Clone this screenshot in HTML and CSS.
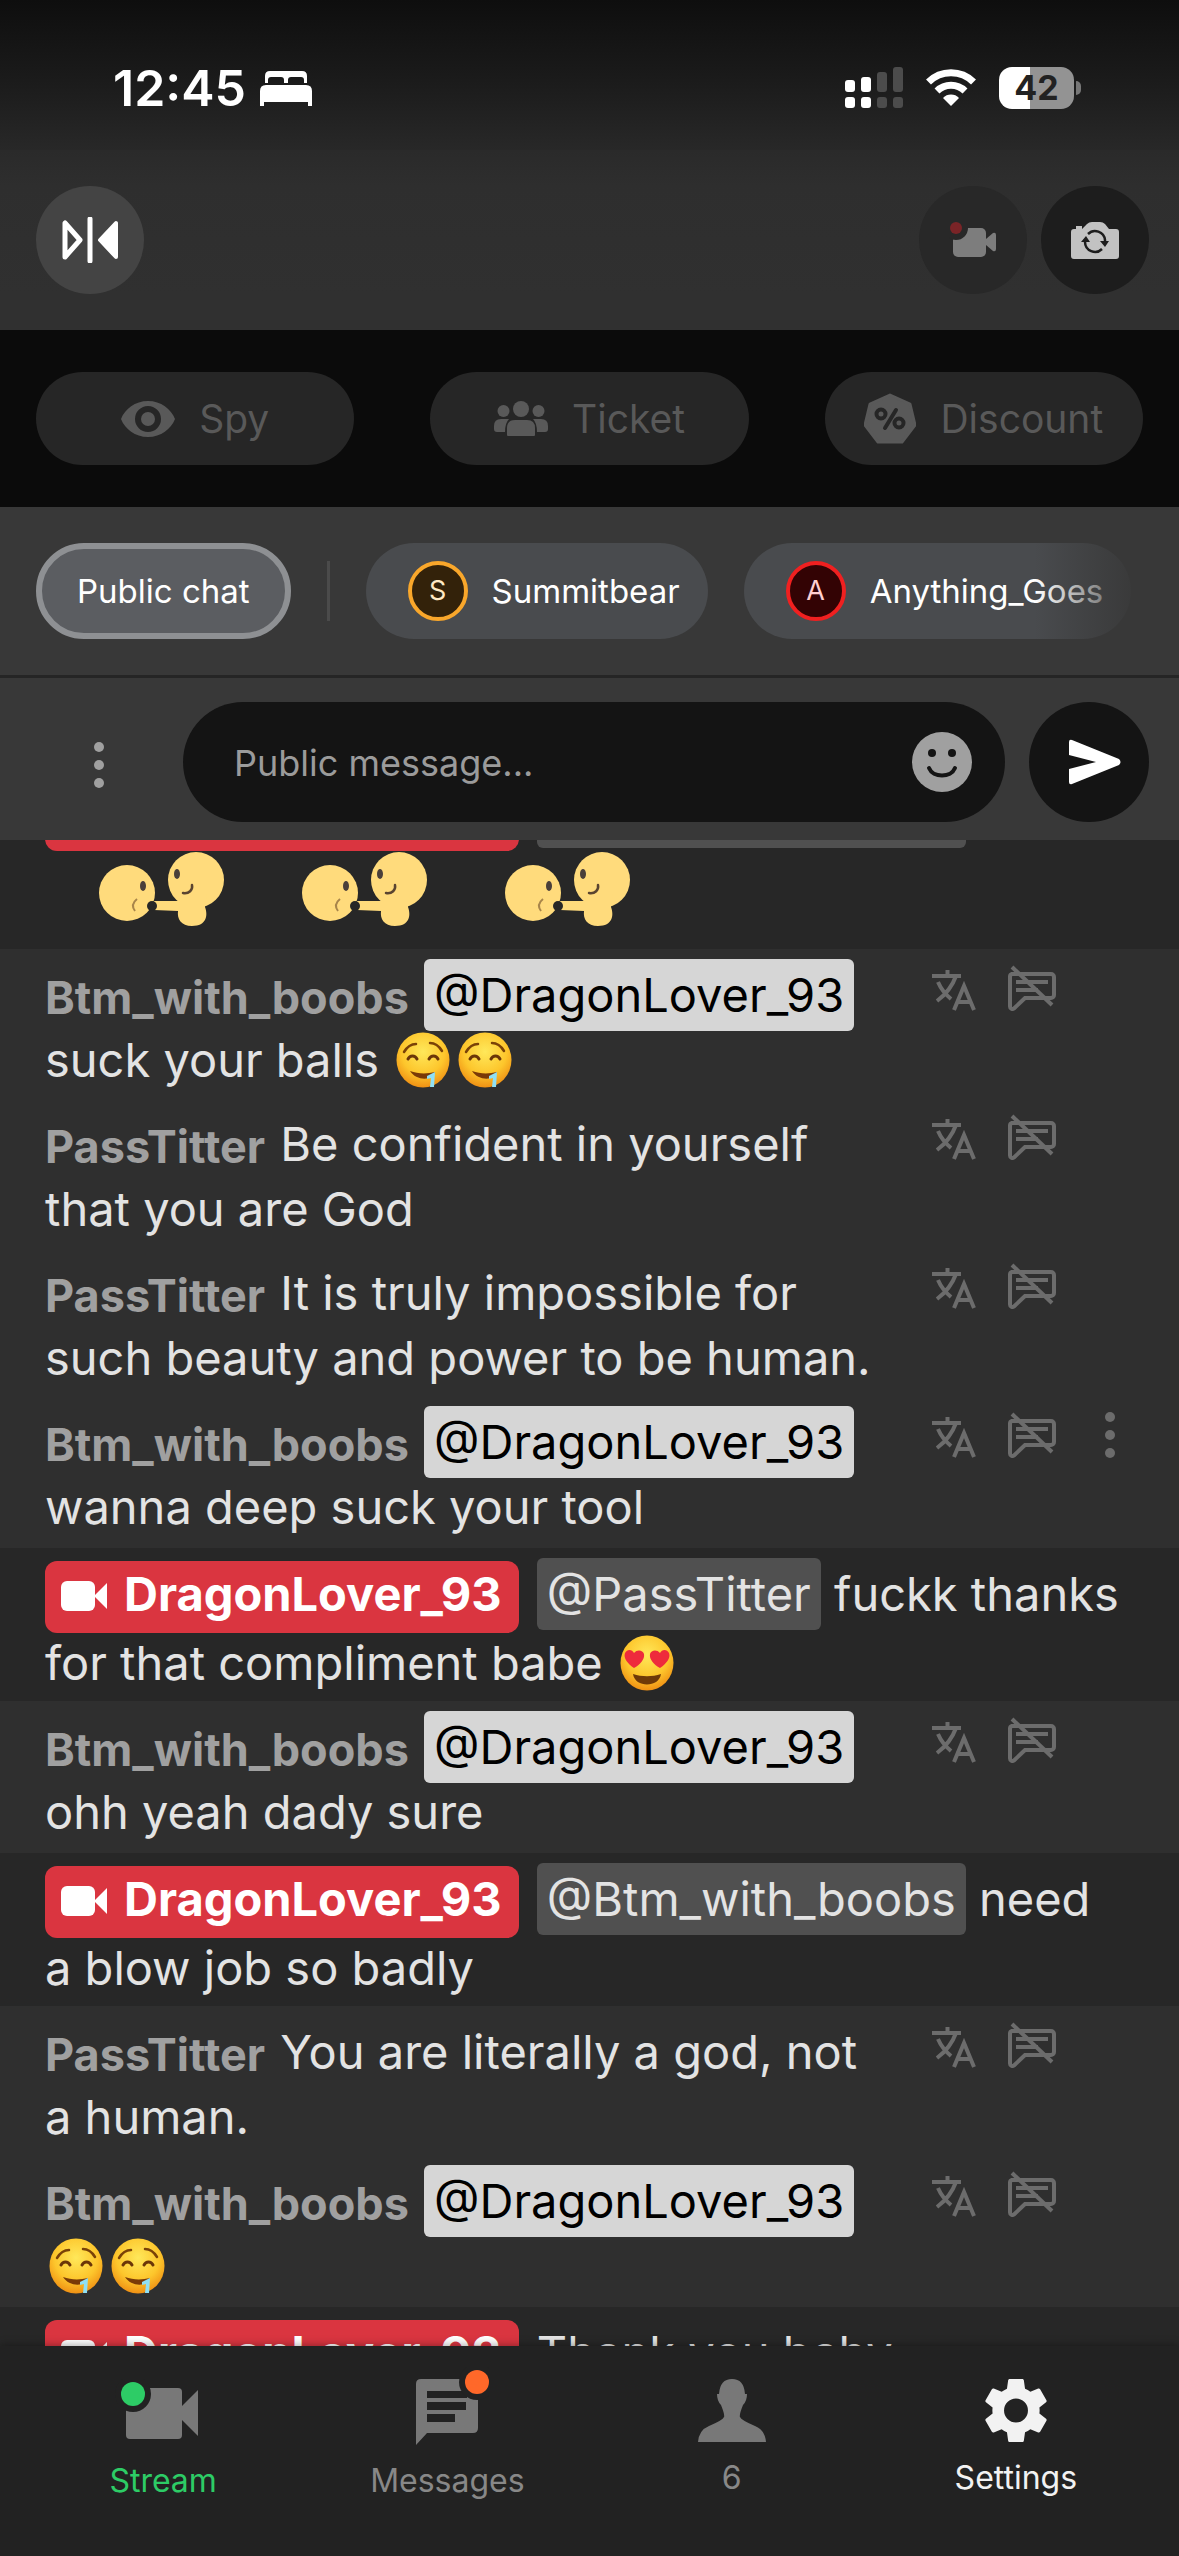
FILE: index.html
```html
<!DOCTYPE html>
<html lang="en">
<head>
<meta charset="utf-8">
<meta name="viewport" content="width=device-width, initial-scale=1">
<title>Live stream chat</title>
<link rel="stylesheet" href="styles.css">
</head>
<body>
<svg class="sprite" width="0" height="0" aria-hidden="true">
  <defs>
    <radialGradient id="face" cx="50%" cy="35%" r="68%">
      <stop offset="0" stop-color="#ffe85a"/><stop offset=".6" stop-color="#fdc62c"/><stop offset="1" stop-color="#ee8a11"/>
    </radialGradient>
  </defs>
  <symbol id="i-translate" viewBox="0 0 48 48">
    <path d="M2 11h29M17.500 5v6M26 11C22 22 15 30 7 36M8 17c3 7 7 12 13 17" fill="none" stroke="currentColor" stroke-width="4"/>
    <path d="M24 45l10-24 10 24M27 37h14" fill="none" stroke="currentColor" stroke-width="4"/>
  </symbol>
  <symbol id="i-mute" viewBox="0 0 48 48">
    <path d="M4 9h39a3 3 0 0 1 3 3v18a3 3 0 0 1-3 3H17L6 43.500a2.500 2.500 0 0 1-4-2V12a3 3 0 0 1 2-3z" fill="none" stroke="currentColor" stroke-width="4"/>
    <path d="M8 17h32M8 25h22" stroke="currentColor" stroke-width="4"/>
    <path d="M4 2l40 38" stroke="currentColor" stroke-width="4"/>
  </symbol>
  <symbol id="i-dots" viewBox="0 0 48 48">
    <circle cx="24" cy="5" r="5" fill="currentColor"/><circle cx="24" cy="23" r="5" fill="currentColor"/><circle cx="24" cy="41" r="5" fill="currentColor"/>
  </symbol>
  <symbol id="i-cam" viewBox="0 0 46 30">
    <rect width="34" height="30" rx="6" fill="currentColor"/><path d="M33 15L46 2v26z" fill="currentColor"/>
  </symbol>
  <symbol id="e-drool" viewBox="0 0 54 56">
    <ellipse cx="27" cy="28" rx="26.500" ry="27.500" fill="url(#face)"/>
    <path d="M8 20c3-5 7-8 12-8M34 11c5 0 9 3 12 8" fill="none" stroke="#7a4207" stroke-width="2.500" stroke-linecap="round"/>
    <path d="M12 27c2-4 7-4 9 0M33 27c2-4 7-4 9 0" fill="none" stroke="#6b3608" stroke-width="3" stroke-linecap="round"/>
    <path d="M14 39c8 3 17 3 25 1-2 9-19 9-25-1z" fill="#7a3a08"/>
    <path d="M31 44l8-4-1 15h-4l1-9-4 1z" fill="#8fe0f5"/>
  </symbol>
  <symbol id="e-love" viewBox="0 0 54 56">
    <ellipse cx="27" cy="28" rx="26.500" ry="27.500" fill="url(#face)"/>
    <path d="M14 33C8 29 3 23 5 18c2-4 7-4 9 0 3-4 9-3 10 1 1 5-4 11-10 14z" fill="#ee2b3c"/>
    <path d="M40 33c6-4 11-10 9-15-2-4-7-4-9 0-3-4-9-3-10 1-1 5 4 11 10 14z" fill="#ee2b3c"/>
    <path d="M13 39c9 3 19 3 28 0-2 14-26 14-28 0z" fill="#6f3a08"/>
  </symbol>
  <symbol id="e-pair" viewBox="0 0 190 99">
    <g fill="#ffdb7c">
      <circle cx="82" cy="47" r="28"/><circle cx="151" cy="34" r="28"/>
      <path d="M109 55h25l2-8h26l-2 14c3 8 2 19-13 19-11 0-15-7-14-15l-24-1z"/>
    </g>
    <circle cx="107" cy="60" r="5" fill="#272727"/>
    <ellipse cx="98" cy="40" rx="3" ry="5" fill="#4a3f3a"/><ellipse cx="132" cy="28" rx="3" ry="5" fill="#4a3f3a"/>
    <path d="M138 47c6 1 10-3 9-8" fill="none" stroke="#5a4430" stroke-width="2.500" stroke-linecap="round"/>
    <path d="M92 53c-5 4-5 8-2 12" fill="none" stroke="#a8854a" stroke-width="2"/>
  </symbol>
</svg>

<header class="top">
  <div class="status">
    <div class="status-left">
      <span class="clock">12:45</span>
      <svg width="52" height="37" viewBox="0 0 52 37" fill="#fff"><path d="M5 13V6q0-5 5-5h32q5 0 5 5v7h-3V10q0-3-3-3H31q-3 0-3 3v3h-4V10q0-3-3-3H11q-3 0-3 3v3zM0 36V21q0-6 6-6h40q6 0 6 6v15h-4v-4H4v4z"/></svg>
    </div>
    <div class="status-right">
      <svg width="58" height="42" viewBox="0 0 58 42"><g fill="#fff"><rect y="13" width="10" height="12" rx="3"/><rect x="16" y="10" width="10" height="15" rx="3"/><rect y="30" width="10" height="11" rx="3"/><rect x="16" y="30" width="10" height="11" rx="3"/></g><g fill="#4c4c4c"><rect x="32" y="5" width="10" height="20" rx="3"/><rect x="48" width="10" height="25" rx="3"/><rect x="32" y="30" width="10" height="11" rx="3"/><rect x="48" y="30" width="10" height="11" rx="3"/></g></svg>
      <svg width="52" height="38" viewBox="0 0 52 38" fill="none" stroke="#fff" stroke-width="7"><path d="M3.500 13a32 32 0 0 1 45 0M12 22a20 20 0 0 1 28 0"/><path d="M26 37l-8-8a11 11 0 0 1 16 0z" fill="#fff" stroke="none"/></svg>
      <div class="battery"><span>42</span></div>
    </div>
  </div>
  <div class="tools">
    <button class="round flip" aria-label="Mirror"><svg width="56" height="46" viewBox="0 0 56 46"><path d="M3 6v34l15-17z" fill="none" stroke="#fff" stroke-width="5" stroke-linejoin="round"/><path d="M28 2v42" stroke="#fff" stroke-width="5" stroke-linecap="round"/><path d="M54 6v34L38 23z" fill="#fff" stroke="#fff" stroke-width="4" stroke-linejoin="round"/></svg></button>
    <div class="tools-right">
      <button class="round rec" aria-label="Record"><svg width="48" height="36" viewBox="0 0 48 36"><rect x="4" y="6" width="33" height="29" rx="5" fill="#7d7d7d"/><path d="M37 17l7-6q3-1 3 2v14q0 3-3 2l-7-6z" fill="#7d7d7d"/><circle cx="7" cy="6" r="12" fill="#282828"/><circle cx="7" cy="6" r="6" fill="#7a2427"/></svg></button>
      <button class="round swap" aria-label="Switch camera"><svg width="48" height="37" viewBox="0 0 48 37"><path d="M0 10q0-3 3-3h2V4h6v3l5-5q2-2 5-2h8q3 0 5 2l4 5h7q3 0 3 3v24q0 3-3 3H3q-3 0-3-3z" fill="#c2c2c2"/><path d="M17 12a10 10 0 0 1 17 6v3M31 27a10 10 0 0 1-17-7v-3" fill="none" stroke="#1d1d1d" stroke-width="2.500"/><path d="M10 20l5-6 4 6zM29 19h9l-4 6z" fill="#1d1d1d"/></svg></button>
    </div>
  </div>
</header>

<nav class="modes" aria-label="Show modes">
  <button class="mode"><svg width="54" height="36" viewBox="0 0 54 36"><path d="M27 0C14 0 4 8 0 18c4 10 14 18 27 18s23-8 27-18C50 8 40 0 27 0zm0 31a13 13 0 1 1 0-26 13 13 0 0 1 0 26z" fill="currentColor"/><circle cx="27" cy="18" r="7" fill="currentColor"/></svg>Spy</button>
  <button class="mode"><svg width="54" height="36" viewBox="0 0 54 36" fill="currentColor"><circle cx="27" cy="8" r="8"/><circle cx="9.500" cy="10" r="6"/><circle cx="44.500" cy="10" r="6"/><path d="M13 34V27q0-8 8-8h12q8 0 8 8v7q0 1-1 1H14q-1 0-1-1zM0 28v-3q0-7 7-7h8q-4 4-4 13H3q-3 0-3-3zM54 28v-3q0-7-7-7h-8q4 4 4 13h8q3 0 3-3z"/></svg>Ticket</button>
  <button class="mode"><svg width="52" height="52" viewBox="0 0 52 52"><path d="M26 2l20 9 5 21-13 17H14L1 32 6 11z" fill="currentColor" stroke="currentColor" stroke-width="3" stroke-linejoin="round"/><g fill="none" stroke="#262626" stroke-width="4" stroke-linecap="round"><circle cx="17" cy="21" r="4.500"/><circle cx="35" cy="30" r="4.500"/><path d="M32 17L21 35"/></g></svg>Discount</button>
</nav>

<div class="tabs">
  <button class="tab active">Public chat</button>
  <span class="divider"></span>
  <button class="tab"><span class="avatar gold">S</span>Summitbear</button>
  <button class="tab"><span class="avatar red">A</span>Anything_Goes</button>
</div>

<form class="composer">
  <button type="button" class="more" aria-label="More options"><svg width="48" height="48"><use href="#i-dots"/></svg></button>
  <div class="field">
    <input type="text" placeholder="Public message..." aria-label="Public message">
    <button type="button" class="smile" aria-label="Emoji"><svg width="60" height="60" viewBox="0 0 60 60"><circle cx="30" cy="30" r="30" fill="#a0a0a0"/><circle cx="20" cy="21" r="4" fill="#141414"/><circle cx="40" cy="21" r="4" fill="#141414"/><path d="M17 36c4 10 22 10 26 0" fill="none" stroke="#141414" stroke-width="4" stroke-linecap="round"/></svg></button>
  </div>
  <button type="button" class="send" aria-label="Send"><svg width="52" height="46" viewBox="0 0 52 46"><path d="M0 3Q0 0 3 1l47 19q3 3 0 6L3 45q-3 1-3-2V30l27-7L0 16z" fill="#fff"/></svg></button>
</form>

<main class="chat">
  <div class="log">
    <div class="msg host">
      <p><b class="badge"><svg class="cam" width="46" height="30"><use href="#i-cam"/></svg>DragonLover_93</b> <span class="tag">@Btm_with_boobs</span><br><svg class="pair" width="190" height="99"><use href="#e-pair"/></svg> <svg class="pair" width="190" height="99"><use href="#e-pair"/></svg> <svg class="pair" width="190" height="99"><use href="#e-pair"/></svg></p>
    </div>
    <div class="msg">
      <p><b class="name">Btm_with_boobs</b> <span class="tag me">@DragonLover_93</span> suck your balls <svg class="emoji" role="img" aria-label="🤤"><use href="#e-drool"/></svg><svg class="emoji" role="img" aria-label="🤤"><use href="#e-drool"/></svg></p>
      <div class="actions"><button aria-label="Translate"><svg><use href="#i-translate"/></svg></button><button aria-label="Mute"><svg><use href="#i-mute"/></svg></button></div>
    </div>
    <div class="msg">
      <p><b class="name">PassTitter</b> Be confident in yourself that you are God</p>
      <div class="actions"><button aria-label="Translate"><svg><use href="#i-translate"/></svg></button><button aria-label="Mute"><svg><use href="#i-mute"/></svg></button></div>
    </div>
    <div class="msg">
      <p><b class="name">PassTitter</b> It is truly impossible for such beauty and power to be human.</p>
      <div class="actions"><button aria-label="Translate"><svg><use href="#i-translate"/></svg></button><button aria-label="Mute"><svg><use href="#i-mute"/></svg></button></div>
    </div>
    <div class="msg last">
      <p><b class="name">Btm_with_boobs</b> <span class="tag me">@DragonLover_93</span> wanna deep suck your tool</p>
      <div class="actions"><button aria-label="Translate"><svg><use href="#i-translate"/></svg></button><button aria-label="Mute"><svg><use href="#i-mute"/></svg></button><button aria-label="More"><svg><use href="#i-dots"/></svg></button></div>
    </div>
    <div class="msg host">
      <p><b class="badge"><svg class="cam" width="46" height="30"><use href="#i-cam"/></svg>DragonLover_93</b> <span class="tag">@PassTitter</span> fuckk thanks for that compliment babe <svg class="emoji" role="img" aria-label="😍"><use href="#e-love"/></svg></p>
    </div>
    <div class="msg last">
      <p><b class="name">Btm_with_boobs</b> <span class="tag me">@DragonLover_93</span> ohh yeah dady sure</p>
      <div class="actions"><button aria-label="Translate"><svg><use href="#i-translate"/></svg></button><button aria-label="Mute"><svg><use href="#i-mute"/></svg></button></div>
    </div>
    <div class="msg host">
      <p><b class="badge"><svg class="cam" width="46" height="30"><use href="#i-cam"/></svg>DragonLover_93</b> <span class="tag">@Btm_with_boobs</span> need a&nbsp;blow job so badly</p>
    </div>
    <div class="msg">
      <p><b class="name">PassTitter</b> You are literally a god, not a&nbsp;human.</p>
      <div class="actions"><button aria-label="Translate"><svg><use href="#i-translate"/></svg></button><button aria-label="Mute"><svg><use href="#i-mute"/></svg></button></div>
    </div>
    <div class="msg last">
      <p><b class="name">Btm_with_boobs</b> <span class="tag me">@DragonLover_93</span> <svg class="emoji" role="img" aria-label="🤤"><use href="#e-drool"/></svg><svg class="emoji" role="img" aria-label="🤤"><use href="#e-drool"/></svg></p>
      <div class="actions"><button aria-label="Translate"><svg><use href="#i-translate"/></svg></button><button aria-label="Mute"><svg><use href="#i-mute"/></svg></button></div>
    </div>
    <div class="msg host">
      <p><b class="badge"><svg class="cam" width="46" height="30"><use href="#i-cam"/></svg>DragonLover_93</b> Thank you baby</p>
    </div>
  </div>
</main>

<nav class="bottom" aria-label="Main">
  <a href="#" class="item stream"><svg width="96" height="66" viewBox="0 0 96 66"><rect x="11" y="9" width="56" height="51" rx="4" fill="#787878"/><path d="M67 27l16-16v46L67 41z" fill="#787878"/><circle cx="18" cy="15" r="18" fill="#222"/><circle cx="18" cy="15" r="12" fill="#2dcc66"/></svg>Stream</a>
  <a href="#" class="item"><svg width="84" height="78" viewBox="0 0 84 78"><path d="M11 17q0-5 5-5h52q5 0 5 5v44q0 5-5 5H22L11 78z" fill="#787878"/><path d="M22 24h40v7H22zM22 35h39v8H22zM22 47h28v8H22z" fill="#222"/><circle cx="72" cy="15" r="18" fill="#222"/><circle cx="72" cy="15" r="12" fill="#ff6829"/></svg>Messages</a>
  <a href="#" class="item plain"><svg width="68" height="63" viewBox="0 0 68 63"><path d="M0 63q1-12 11-16 14-6 15-9 1-2-3-12-4-4-4-11h2Q22 0 34 0t13 15h2q0 7-4 11-4 10-3 12 1 3 15 9 10 4 11 16z" fill="#787878"/></svg>6</a>
  <a href="#" class="item plain current"><svg width="64" height="63" viewBox="2.270 2 19.460 20"><path fill="#f2f2f2" d="M19.430 12.980c.04-.32.07-.64.07-.98s-.03-.66-.07-.98l2.110-1.650c.19-.15.24-.42.12-.64l-2-3.460c-.12-.22-.39-.3-.61-.22l-2.490 1c-.52-.4-1.080-.73-1.690-.98l-.38-2.650C14.460 2.180 14.250 2 14 2h-4c-.25 0-.46.18-.49.42l-.38 2.650c-.61.25-1.170.59-1.690.98l-2.490-1c-.23-.09-.49 0-.61.22l-2 3.460c-.13.22-.07.49.12.64l2.110 1.650c-.04.32-.07.65-.07.98s.03.66.07.98l-2.110 1.650c-.19.15-.24.42-.12.64l2 3.460c.12.22.39.3.61.22l2.490-1c.52.4 1.080.73 1.690.98l.38 2.650c.03.24.24.42.49.42h4c.25 0 .46-.18.49-.42l.38-2.650c.61-.25 1.170-.59 1.690-.98l2.490 1c.23.09.49 0 .61-.22l2-3.460c.12-.22.07-.49-.12-.64zM12 15.800a3.800 3.800 0 1 1 0-7.600 3.800 3.800 0 0 1 0 7.600z"/></svg>Settings</a>
</nav>
</body>
</html>
```

FILE: styles.css
```css
* { box-sizing: border-box; }

body {
  margin: 0;
  height: 100vh;
  display: flex;
  flex-direction: column;
  overflow: hidden;
  background: #2f2f2f;
  color: #e3e3e3;
  font-family: Inter, "Liberation Sans", sans-serif;
  font-optical-sizing: none;
}

button {
  border: 0;
  padding: 0;
  background: none;
  color: inherit;
  font: inherit;
}

button svg, a svg { display: block; }
.sprite { position: absolute; }

/* Header */
.top {
  flex: none;
  background: #303030;
  padding-bottom: 36px;
}

.status {
  height: 150px;
  padding: 26px 98px 0 113px;
  display: flex;
  justify-content: space-between;
  align-items: center;
  background: linear-gradient(#0e0e0e, #1a1a1a 50%, #282828);
}

.status-left { display: flex; align-items: center; gap: 14px; }
.status-right { display: flex; align-items: center; gap: 22px; }
.clock { font-size: 50px; line-height: 60px; font-weight: 600; color: #fff; }

.battery {
  width: 75px;
  height: 42px;
  margin-right: 7px;
  border-radius: 13px;
  background: linear-gradient(90deg, #fff 42%, #939393 42%);
  color: #222;
  font-size: 34px;
  line-height: 42px;
  font-weight: 700;
  text-align: center;
  position: relative;
}

.battery::after {
  content: "";
  position: absolute;
  left: 77px;
  top: 14px;
  width: 5px;
  height: 14px;
  border-radius: 0 6px 6px 0;
  background: #777;
}

.tools {
  padding: 36px 30px 0 36px;
  display: flex;
  justify-content: space-between;
  background: linear-gradient(#2a2a2a, #2e2e2e 36px, #303030);
}

.tools-right { display: flex; gap: 14px; }

.round {
  width: 108px;
  height: 108px;
  border-radius: 50%;
  display: grid;
  place-items: center;
}

.flip { background: #444; }
.rec { background: #282828; }
.swap { background: #1d1d1d; }

/* Show modes */
.modes {
  flex: none;
  padding: 42px 36px;
  display: grid;
  grid-template-columns: repeat(3, 1fr);
  gap: 76px;
  background: #0b0b0b;
}

.mode {
  height: 93px;
  border-radius: 47px;
  background: #262626;
  color: #595959;
  font-size: 39px;
  display: flex;
  align-items: center;
  justify-content: center;
  gap: 24px;
}

/* Chat tabs */
.tabs {
  flex: none;
  padding: 36px;
  border-bottom: 3px solid #252525;
  display: flex;
  align-items: center;
  gap: 36px;
  background: #383838;
  overflow: hidden;
  position: relative;
}

.tabs::after {
  content: "";
  position: absolute;
  top: 0;
  bottom: 0;
  right: 36px;
  width: 108px;
  background: linear-gradient(90deg, #38383800, #383838);
}

.tab {
  flex: none;
  height: 96px;
  padding: 0 28px 0 42px;
  border-radius: 48px;
  background: #494b4e;
  color: #fff;
  font-size: 33px;
  display: flex;
  align-items: center;
  gap: 24px;
}

.tab.active {
  padding: 0 35px;
  border: 6px solid #8e9093;
  background: #5b5d61;
}

.divider { width: 3px; height: 60px; background: #4b4b4b; }

.avatar {
  width: 60px;
  height: 60px;
  border: 4px solid #f9a72b;
  border-radius: 50%;
  background: #33220a;
  color: #ffe9c4;
  font-size: 27px;
  line-height: 52px;
  text-align: center;
}

.avatar.red { border-color: #f02020; background: #330304; color: #ffd0d0; }

/* Composer */
.composer {
  flex: none;
  padding: 24px 30px 18px 75px;
  display: flex;
  align-items: center;
  background: #383838;
}

.more { margin-right: 60px; padding-top: 8px; color: #a0a0a0; }

.field {
  flex: 1;
  height: 120px;
  margin-right: 24px;
  padding: 0 33px 0 51px;
  border-radius: 60px;
  background: #141414;
  display: flex;
  align-items: center;
}

.field input {
  flex: 1;
  min-width: 0;
  border: 0;
  padding: 2px 0 0;
  outline: 0;
  background: none;
  color: #e3e3e3;
  font: inherit;
  font-size: 36px;
}

.field input::placeholder { color: #9b9b9b; opacity: 1; }

.send {
  width: 120px;
  height: 120px;
  padding-left: 12px;
  border-radius: 50%;
  background: #141414;
  display: grid;
  place-items: center;
}

/* Chat log, scrolled past the first line */
.chat { flex: 1; min-height: 0; overflow: hidden; }
.log { margin-top: -74px; }

.msg {
  padding: 13px 45px 6px;
  display: flex;
  gap: 36px;
  background: #2f2f2f;
}

.msg.last { padding-bottom: 9px; }

.msg p {
  flex: 1;
  margin: 0;
  font-size: 47px;
  line-height: 65px;
}

.msg.host { padding: 11px 52px 4px 45px; background: #272727; }
.msg.host p { line-height: 69px; }

.name {
  margin-right: 2px;
  color: #a0a0a0;
  font-size: 45px;
  line-height: 1;
  vertical-align: -2px;
}

.tag {
  padding: 7px 10px 8px;
  border-radius: 6px;
  background: #505050;
}

.tag.me { background: #d6d6d6; color: #000; }

.badge {
  margin-right: 5px;
  padding: 4px 17px 11px 16px;
  border-radius: 12px;
  background: #da3540;
  color: #fff;
}

.cam { margin-right: 17px; }

.emoji {
  width: 54px;
  height: 56px;
  margin: 0 4px;
  vertical-align: -11px;
}

.pair { vertical-align: top; }

.actions {
  width: 204px;
  padding-top: 3px;
  display: flex;
  align-items: flex-start;
  gap: 30px;
  color: #6c6c6c;
}

.actions svg { width: 48px; height: 48px; }

/* Bottom navigation */
.bottom {
  flex: none;
  height: 210px;
  padding: 0 21px 54px;
  display: grid;
  grid-template-columns: repeat(4, 1fr);
  background: #222;
  box-shadow: 0 0 9px #0006;
  position: relative;
}

.item {
  padding-bottom: 3px;
  display: flex;
  flex-direction: column;
  align-items: center;
  justify-content: flex-end;
  gap: 18px;
  color: #888;
  font-size: 32px;
  line-height: 36px;
  text-decoration: none;
}

.item.plain { padding-bottom: 6px; }
.item.stream { color: #2dcc66; }
.item.current { color: #f2f2f2; }
```
